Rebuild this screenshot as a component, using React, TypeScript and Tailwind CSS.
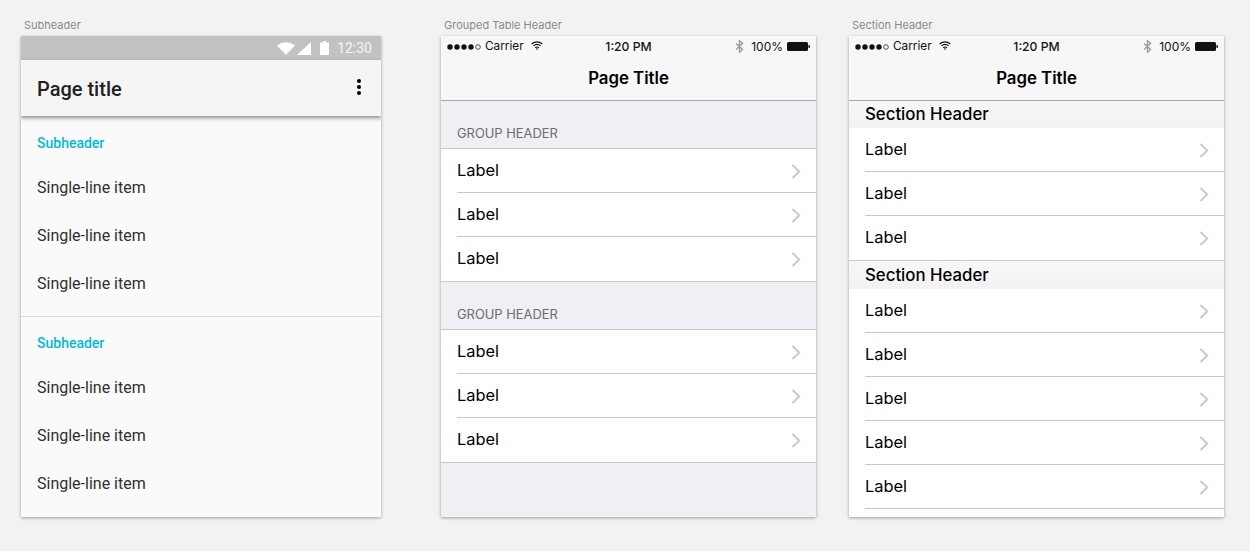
import React from 'react';

const SF = "font-['Inter','Liberation_Sans',sans-serif]";

const Chevron = ({ last = false }: { last?: boolean }) => (
  <svg width="10" height="15" viewBox="0 0 10 15" fill="none" className={`shrink-0 ${last ? '' : 'translate-y-[1px]'}`}>
    <path d="M1.5 1l6.8 6.5L1.5 14" stroke="#c7c7cc" strokeWidth="1.8" />
  </svg>
);

const IosStatusBar = () => (
  <div className="grid h-5 grid-cols-3 items-center pl-[6px] pr-[6px] pt-[2px] text-[12px] leading-none text-[#111]">
    <div className="flex items-center">
      <svg width="36" height="6" viewBox="0 0 36 6" className="shrink-0">
        <circle cx="3" cy="3" r="2.7" fill="#111" />
        <circle cx="10" cy="3" r="2.7" fill="#111" />
        <circle cx="17" cy="3" r="2.7" fill="#111" />
        <circle cx="24" cy="3" r="2.7" fill="#111" />
        <circle cx="31" cy="3" r="2.3" fill="none" stroke="#111" strokeWidth="0.7" />
      </svg>
      <span className="ml-[2px] text-[11.8px]">Carrier</span>
      <svg width="12" height="9" viewBox="0 0 12 9" fill="none" stroke="#111" strokeWidth="1.2" className="ml-[7px] -mt-[3px]">
        <path d="M0.6 3Q6-1.4 11.4 3" />
        <path d="M2.4 4.9Q6 1.9 9.6 4.9" />
        <path d="M4.2 6.7Q6 5.3 7.8 6.7" />
        <path d="M6 9L4.9 7.7Q6 6.9 7.1 7.7Z" fill="#111" stroke="none" />
      </svg>
    </div>
    <div className="text-center text-[12.2px] font-medium">1:20 PM</div>
    <div className="flex items-center justify-end">
      <svg width="9" height="13" viewBox="0 0 9 13" fill="none" stroke="#a0a0a4" strokeWidth="1.5" className="-mt-[2px]">
        <path d="M1 3.5l6.5 6-3 2.7V.8l3 2.7-6.5 6" />
      </svg>
      <span className="ml-[7px] text-[12px]">100%</span>
      <svg width="23" height="9" viewBox="0 0 23 9" className="ml-[4px] -mt-[2px]">
        <rect x="0" y="0" width="21" height="9" rx="1.5" fill="#111" />
        <path d="M21.5 3h.5a1 1 0 0 1 1 1v1a1 1 0 0 1-1 1h-.5z" fill="#111" />
      </svg>
    </div>
  </div>
);

const IosNav = () => (
  <div className="border-b border-[#a7a7aa] bg-[#f7f7f7]">
    <IosStatusBar />
    <div className="flex h-[44px] items-center justify-center text-[16.8px] font-semibold leading-none text-black">Page Title</div>
  </div>
);

const IosRow = ({ last = false, flush = false }: { last?: boolean; flush?: boolean }) => (
  <div className={`flex items-center bg-white pl-4 ${last && flush ? 'h-[45px] border-b border-[#c8c7cc]' : 'h-[44px]'}`}>
    <div className={`flex h-full min-w-0 flex-1 items-center justify-between pr-[15px] ${last ? '' : 'border-b border-[#c8c7cc]'}`}>
      <span className={`text-[16.4px] leading-none text-black ${last ? 'pb-[2px]' : 'pb-px'}`}>Label</span>
      <Chevron last={last} />
    </div>
  </div>
);

const GroupedTable = () => (
  <div className={`flex h-full flex-col bg-[#efeff4] ${SF}`}>
    <IosNav />
    {[0, 1].map((g) => (
      <div key={g}>
        <div className="flex h-[47px] items-end pb-[6px] pl-4 text-[12.9px] leading-4 text-[#6d6d72]">GROUP HEADER</div>
        <div className="border-t border-[#c8c7cc]">
          <IosRow />
          <IosRow />
          <IosRow last flush />
        </div>
      </div>
    ))}
  </div>
);

const SectionHead = ({ height }: { height: string }) => (
  <div className={`flex items-center bg-gradient-to-b from-[#f7f7f7] to-[#f2f2f2] pl-4 text-[16.8px] font-medium leading-none text-black ${height}`}>Section Header</div>
);

const SectionTable = () => (
  <div className={`flex h-full flex-col overflow-hidden bg-white ${SF}`}>
    <IosNav />
    <SectionHead height="h-[27px]" />
    <IosRow />
    <IosRow />
    <IosRow last />
    <div className="h-px shrink-0 bg-[#c8c7cc]" />
    <SectionHead height="h-[28px]" />
    {[0, 1, 2, 3, 4].map((i) => (
      <IosRow key={i} />
    ))}
  </div>
);

const AndroidItem = () => (
  <div className="flex h-12 items-center pl-4 pt-[2px] text-[16px] leading-none text-[#303030]">Single-line item</div>
);

const AndroidTable = () => (
  <div className="flex h-full flex-col bg-[#fafafa] font-['Roboto',sans-serif]">
    <div className="flex h-6 items-center justify-end bg-[#c2c2c2] pr-[9px]">
      <svg width="18" height="13" viewBox="0 0 18 13" fill="#fff">
        <path d="M0 3.5Q9-3 18 3.5L9 13Z" />
      </svg>
      <svg width="14" height="13" viewBox="0 0 14 13" fill="#fff" className="ml-[2px]">
        <path d="M14 0V13H0Z" />
      </svg>
      <svg width="9" height="14" viewBox="0 0 9 14" fill="#fff" className="ml-[9px]">
        <path d="M3 0h3v1.5h3V14H0V1.5h3Z" />
      </svg>
      <span className="ml-2 text-[14px] leading-none text-[#f5f5f5]">12:30</span>
    </div>
    <div className="relative z-10 flex h-14 items-center justify-between bg-[#f5f5f5] pl-4 pr-5 shadow-[0_2px_4px_rgba(0,0,0,0.45)]">
      <span className="pt-[2px] text-[20px] font-medium leading-none text-[#212121]">Page title</span>
      <svg width="4" height="16" viewBox="0 0 4 16" fill="#000" className="-mt-[2px]">
        <circle cx="2" cy="2" r="2" />
        <circle cx="2" cy="8" r="2" />
        <circle cx="2" cy="14" r="2" />
      </svg>
    </div>
    <div className="flex h-[47px] items-end pb-[10px] pl-4 text-[14px] font-medium leading-5 text-[#00bcd4]">Subheader</div>
    <AndroidItem />
    <AndroidItem />
    <AndroidItem />
    <div className="mt-[9px] h-px bg-[#d9d9d9]" />
    <div className="flex h-[46px] items-end pb-[10px] pl-4 text-[14px] font-medium leading-5 text-[#00bcd4]">Subheader</div>
    <AndroidItem />
    <AndroidItem />
    <AndroidItem />
  </div>
);

const Frame = ({ title, width, className, children }: { title: string; width: string; className?: string; children: React.ReactNode }) => (
  <div className={`${width} ${className ?? ''} shrink-0`}>
    <div className="flex h-9 items-start pl-[3px] pt-[19px] font-['Inter',sans-serif] text-[11px] leading-3 text-[#8a8a8a]">{title}</div>
    <div className="h-[481px] overflow-hidden shadow-[0_1px_3px_rgba(0,0,0,0.35)]">{children}</div>
  </div>
);

export default function App() {
  return (
    <div className="flex h-[551px] w-[1250px] items-start overflow-hidden bg-[#f2f2f2] pl-[21px]">
      <Frame title="Subheader" width="w-[360px]">
        <AndroidTable />
      </Frame>
      <Frame title="Grouped Table Header" width="w-[375px]" className="ml-[60px]">
        <GroupedTable />
      </Frame>
      <Frame title="Section Header" width="w-[375px]" className="ml-[33px]">
        <SectionTable />
      </Frame>
    </div>
  );
}
